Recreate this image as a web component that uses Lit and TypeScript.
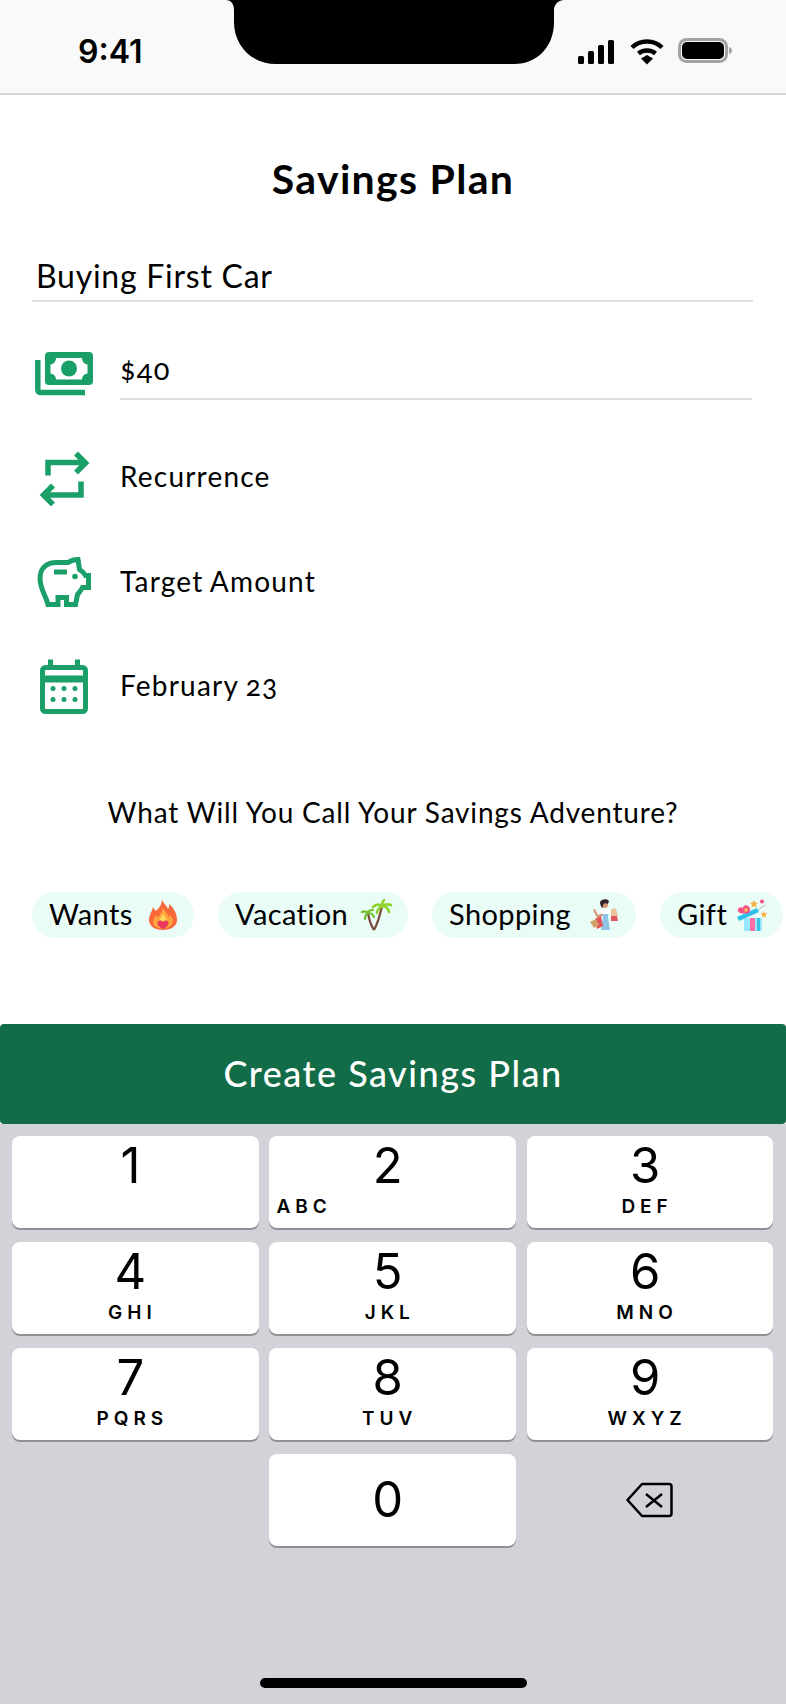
import { LitElement, html, css, svg } from 'lit';

const keys = [
  { d: '1', l: '' },
  { d: '2', l: 'ABC', left: true },
  { d: '3', l: 'DEF' },
  { d: '4', l: 'GHI' },
  { d: '5', l: 'JKL' },
  { d: '6', l: 'MNO' },
  { d: '7', l: 'PQRS' },
  { d: '8', l: 'TUV' },
  { d: '9', l: 'WXYZ' },
];

const flame = svg`<svg class="emoji" viewBox="0 0 32 32">
  <path fill="#f8683a" d="M15 0c1 5 5 6 6 10 1-1 1.500-3 1-5 5 4 8 10 8 16 0 6-6 10-14 10S2 27 2 21c0-5 3-8 4-13 1 2 2 3 3 4 3-3 6-6 6-12z"/>
  <path fill="#ffa53f" d="M16 9c1 3 5 6 6 9 .5-.5 1-1.500 1-2 2 2 3 4 3 6 0 4-4 7.500-10 7.500S6 27 6 23c0-3 2-5 3-7 .5 1 1 2 2 2 2-2 4-5 5-9z"/>
  <path fill="#ffd85c" d="M16 15c1 2 4 5 4 8 0 3-2 5-4 5s-4-2-4-5c0-3 3-5 4-8z"/>
  <path fill="#e8385f" d="M16 30c-2-1-5.500-3-5.500-6 0-2.500 3.500-3.500 5.500-1 2-2.500 5.500-1.500 5.500 1 0 3-3.500 5-5.500 6z"/>
</svg>`;

const palm = svg`<svg class="emoji" viewBox="0 0 32 32">
  <path fill="none" stroke="#7a4a3c" stroke-width="2.200" d="M13 31C9 25 8 20 7 14M13 31c4-7 6-15 8-24" />
  <g fill="none" stroke="#8ed32c" stroke-width="2.600" stroke-linecap="round">
    <path d="M21 7c-3-2-6-2-9 1M21 7c0-3 1-5 2-6M21 7c3-2 6-2 9-1M21 7c3 0 6 2 7 6M21 7c-2 1-5 4-5 7" />
  </g>
  <g fill="none" stroke="#6fc02a" stroke-width="2.200" stroke-linecap="round">
    <path d="M7 14c-2-2-4-2-6-1M7 14c0-2 2-3 5-3M7 14c3 0 5 1 6 4M7 14c-2 1-3 3-3 6" />
  </g>
</svg>`;

const shopper = svg`<svg class="emoji" viewBox="0 0 32 32">
  <path fill="#d79a78" d="M4 11l2-1 3 6 5-2v3l-6 2zM24 10l2-1v5h-2z"/>
  <path fill="#8fc4e6" d="M13 12h7l-1 6 2 13h-9l2-13z"/>
  <path fill="#fff" d="M10 11h12l-2 4h-7z"/>
  <circle cx="16" cy="6" r="3" fill="#d79a78"/>
  <path fill="#33242a" d="M11 3c1-3 7-4 9-1l-1 3c-2-1-4-1-5 1v3c-2-1-3-3-3-6z"/>
  <path fill="#e2555a" d="M6 20l6-3 2 10-6 3z"/>
  <path fill="#d5a06c" d="M1 23l6-3 3 6-5 3z"/>
  <path fill="#e2555a" d="M22 17h6l1 5h-7z"/>
  <path fill="#e9c39a" d="M22 10h5l2 7h-7z"/>
</svg>`;

const gift = svg`<svg class="emoji" viewBox="0 0 32 32">
  <rect x="8" y="19" width="18" height="13" fill="#9ae6fb"/>
  <rect x="14" y="19" width="5" height="13" fill="#fb6fa5"/>
  <rect x="21" y="19" width="3" height="13" fill="#35c3e6"/>
  <path fill="#2cc0e8" d="M1 18l20-9 2 4L3 22z"/>
  <path fill="#f54f8c" d="M13 14c-4 1-10 1-11-2-1-3 3-5 5-3 0-3 4-4 6-1 2 2 1 4 0 6z"/>
  <path fill="#f8c14c" d="M8 10l3-1 1 3-3 1z"/>
  <path fill="#f6b048" d="M18 1l1.200 2.500 2.800.4-2 1.900.5 2.700-2.500-1.300-2.500 1.300.5-2.700-2-1.900 2.800-.4zM28 12l1 2.200 2.400.3-1.800 1.700.5 2.400-2.100-1.200-2.100 1.200.5-2.400-1.800-1.700 2.400-.3z"/>
  <circle cx="26" cy="2.500" r="2" fill="#f54f8c"/>
  <path fill="none" stroke="#cfcfcf" stroke-width="1.200" d="M23 11c1-2 4-4 7-5"/>
</svg>`;

const chips = [
  { label: 'Wants', icon: flame, width: 162 },
  { label: 'Vacation', icon: palm, width: 190 },
  { label: 'Shopping', icon: shopper, width: 204 },
  { label: 'Gift', icon: gift, width: 123 },
];

export class AppRoot extends LitElement {
  static styles = css`
    :host {
      display: block;
      width: 786px;
      height: 1704px;
      overflow: hidden;
      background: #fff;
      font-family: Lato, 'Liberation Sans', sans-serif;
      font-feature-settings: 'onum';
      color: #000;
    }

    .status {
      height: 93px;
      background: #f9f9f9;
      border-bottom: 2px solid #d7d7da;
      display: flex;
      padding-left: 78px;
      box-sizing: content-box;
    }

    .time {
      width: 148px;
      padding-top: 34px;
      font: 600 32px/36px Inter, sans-serif;
    }

    .notch {
      width: 338px;
      height: 64px;
      display: block;
      flex: none;
    }

    .indicators {
      margin-left: 14px;
      display: block;
      width: 156px;
      height: 30px;
      margin-top: 36px;
    }

    .title {
      margin: 0;
      padding-top: 60px;
      height: 48px;
      font-size: 41px;
      line-height: 48px;
      font-weight: 700;
      text-align: center;
      letter-spacing: 1.3px;
    }

    .name {
      margin: 43px 33px 0 32px;
      padding: 9px 0 0 4px;
      height: 56px;
      box-sizing: border-box;
      border-bottom: 2px solid #dfdfe4;
      font-size: 32px;
      line-height: 41px;
      letter-spacing: 0.75px;
    }

    .rows {
      padding: 0 34px 0 35px;
      display: flex;
      flex-direction: column;
    }

    .row {
      display: flex;
      align-items: center;
      height: 104.5px;
    }

    .row svg {
      width: 58px;
      height: 60px;
      flex: none;
      margin-right: 27px;
    }

    .row span {
      font-size: 28px;
      letter-spacing: 1.2px;
      word-spacing: -1px;
    }

    .row.amount {
      height: 46px;
      margin: 50px 0 26px;
    }

    .row.amount span {
      flex: 1;
      height: 48px;
      line-height: 38px;
      border-bottom: 2px solid #dfdfe4;
      font-size: 29px;
    }

    .question {
      margin: 54px 0 0;
      height: 40px;
      font-size: 28px;
      line-height: 40px;
      text-align: center;
      letter-spacing: 0.82px;
    }

    .chips {
      margin-top: 60px;
      padding-left: 32px;
      display: flex;
      gap: 24px;
      overflow: hidden;
    }

    .chip {
      flex: none;
      height: 46px;
      border-radius: 23px;
      background: #e9fcf6;
      padding: 0 15px 2px 17px;
      box-sizing: border-box;
      display: flex;
      align-items: center;
      justify-content: space-between;
      font-size: 29px;
      letter-spacing: 0.4px;
    }

    .emoji {
      width: 32px;
      height: 32px;
      flex: none;
      margin-top: 2px;
    }

    .create {
      margin-top: 86px;
      height: 100px;
      width: 100%;
      display: block;
      border: 0;
      border-radius: 4px;
      background: #126c48;
      color: #fff;
      font: 500 36px Lato, sans-serif;
      letter-spacing: 1.5px;
      padding: 0 0 2px;
    }

    .keyboard {
      height: 580px;
      background: #d1d3d9;
      padding: 12px 0 0 12px;
      box-sizing: border-box;
      display: flex;
      flex-direction: column;
      position: relative;
    }

    .grid {
      display: grid;
      grid-template-columns: repeat(3, 246.7px);
      grid-auto-rows: 92px;
      column-gap: 10.7px;
      row-gap: 14px;
    }

    .key {
      background: #fff;
      border-radius: 8px;
      box-shadow: 0 2px 0 #8f9095;
      font-family: Inter, sans-serif;
      text-align: center;
      padding-right: 10px;
    }

    .digit {
      font-size: 49px;
      font-weight: 400;
      line-height: 60px;
      height: 58.5px;
    }

    .letters {
      font-size: 19px;
      font-weight: 600;
      line-height: 26px;
      letter-spacing: 5px;
      padding-left: 4px;
    }

    .letters.left {
      text-align: left;
      padding-left: 7px;
    }

    .key.zero {
      grid-column: 2;
    }

    .key.zero .digit {
      height: 92px;
      line-height: 92px;
    }

    .backspace {
      display: flex;
      align-items: center;
      justify-content: center;
    }

    .backspace svg {
      width: 48px;
      height: 36px;
    }

    .home {
      position: absolute;
      left: 260px;
      top: 554px;
      width: 267px;
      height: 10px;
      border-radius: 5px;
      background: #000;
    }
  `;

  render() {
    return html`
      <div class="status">
        <div class="time">9:41</div>
        <svg class="notch" viewBox="0 0 338 64">
          <path d="M0 0c5 0 8 4 8 10v12c0 24 18 42 42 42h238c24 0 40-18 40-42V10c0-6 5-10 10-10z" />
        </svg>
        <svg class="indicators" viewBox="0 0 156 30">
          <rect x="0" y="20" width="6" height="8" rx="1.500" />
          <rect x="10" y="15" width="6" height="13" rx="1.500" />
          <rect x="20" y="9" width="6" height="19" rx="1.500" />
          <rect x="30" y="4" width="6" height="24" rx="1.500" />
          <path fill="none" stroke="#000" stroke-width="4.500" d="M54 11.500c8-8 22-8 30 0" />
          <path fill="none" stroke="#000" stroke-width="4.500" d="M60.500 17.500c4.500-4 12.500-4 17 0" />
          <path d="M63 22.500l6-3.500 6 3.500-6 6z" />
          <rect x="101.500" y="3.500" width="47" height="22" rx="7" fill="none" stroke="#a3a3a3" stroke-width="3" />
          <rect x="104" y="6" width="42" height="17" rx="5" />
          <path d="M151 11c2 .5 3 2 3 3.500s-1 3-3 3.500z" fill="#a3a3a3" />
        </svg>
      </div>

      <h1 class="title">Savings Plan</h1>
      <div class="name">Buying First Car</div>

      <div class="rows">
        <div class="row amount">
          <svg viewBox="35 345 58 60">
            <path fill="#1a9f68" d="M49 352h40a4 4 0 0 1 4 4v25a4 4 0 0 1-4 4H49a4 4 0 0 1-4-4v-25a4 4 0 0 1 4-4z" />
            <path fill="#fff" d="M56 358h26c0 3 2 6 5.500 6.500v9c-3.500 .5-5.500 3-5.500 6H56c0-3-2-5.500-5.500-6v-9c3.500-.5 5.500-3.500 5.500-6.500z" />
            <circle cx="69" cy="368.500" r="8" fill="#1a9f68" />
            <path fill="none" stroke="#1a9f68" stroke-width="5.500" d="M37.800 360v30a2.500 2.500 0 0 0 2.500 2.500H85" />
          </svg>
          <span>$40</span>
        </div>
        <div class="row">
          <svg viewBox="35 445.500 58 60">
            <path fill="none" stroke="#1a9f68" stroke-width="5.500" d="M48 475v-13h37M76 453l9.500 9.500L76 472M81 481v13.500H44M53 485l-9.500 9.500L53 504" />
          </svg>
          <span>Recurrence</span>
        </div>
        <div class="row">
          <svg viewBox="35 550.500 58 60">
            <path fill="none" stroke="#1a9f68" stroke-width="5" d="M48 604c-2-8-8-16-8-26 0-11 7-16 17-16h11c3-2 6-3 10-3l1.500 10c3 2 5 4 6 6h3v12h-6c-1.500 3-3.500 5-5 7l-2 10h-9v-7H58v7z" />
            <rect x="54" y="569" width="13" height="5" fill="#1a9f68" />
            <circle cx="75" cy="576" r="2.800" fill="#1a9f68" />
          </svg>
          <span>Target Amount</span>
        </div>
        <div class="row">
          <svg viewBox="35 654.500 58 60">
            <rect x="42.500" y="667" width="43" height="44" rx="3" fill="none" stroke="#1a9f68" stroke-width="5" />
            <rect x="42" y="675" width="44" height="7" fill="#1a9f68" />
            <rect x="48" y="659" width="5" height="9" fill="#1a9f68" />
            <rect x="75" y="659" width="5" height="9" fill="#1a9f68" />
            ${[53, 64, 75].map((x) => [688, 699].map((y) => svg`<circle cx=${x} cy=${y} r="2.500" fill="#1a9f68" />`))}
          </svg>
          <span>February 23</span>
        </div>
      </div>

      <p class="question">What Will You Call Your Savings Adventure?</p>

      <div class="chips">
        ${chips.map((c) => html`<div class="chip" style="width: ${c.width}px">${c.label}${c.icon}</div>`)}
      </div>

      <button class="create">Create Savings Plan</button>

      <div class="keyboard">
        <div class="grid">
          ${keys.map((k) => html`
            <div class="key">
              <div class="digit">${k.d}</div>
              <div class="letters ${k.left ? 'left' : ''}">${k.l}</div>
            </div>
          `)}
          <div class="key zero"><div class="digit">0</div></div>
          <div class="backspace">
            <svg viewBox="0 0 48 36">
              <path fill="none" stroke="#000" stroke-width="2.500" stroke-linejoin="round" d="M16 2h27a2.500 2.500 0 0 1 2.500 2.500v27a2.500 2.500 0 0 1-2.500 2.500H16L1.500 18z" />
              <path fill="none" stroke="#000" stroke-width="2.500" d="M20 12l16 13M36 12L20 25" />
            </svg>
          </div>
        </div>
        <div class="home"></div>
      </div>
    `;
  }
}

customElements.define('app-root', AppRoot);
